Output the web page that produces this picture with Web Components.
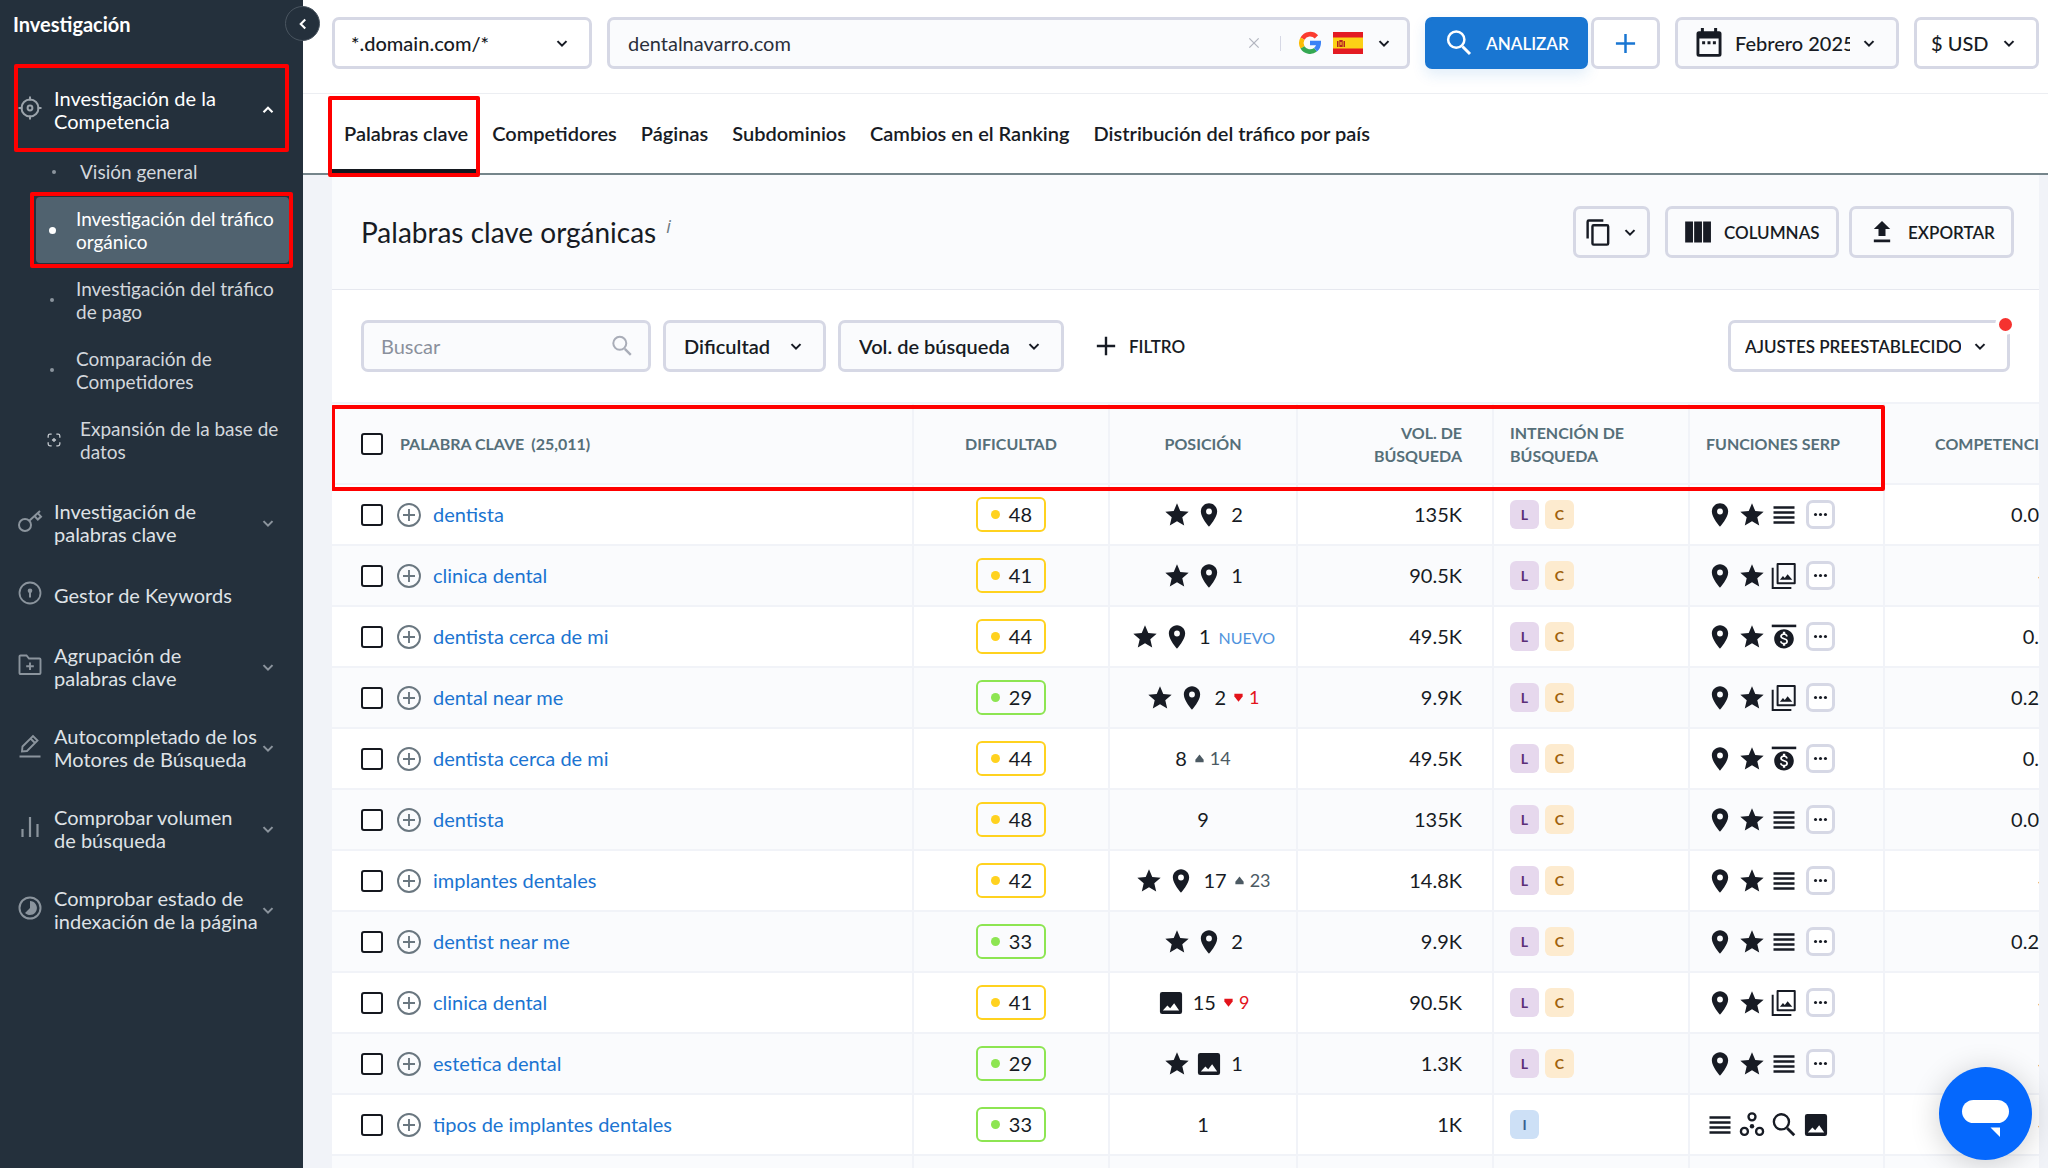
<!DOCTYPE html>
<html lang="es">
<head>
<meta charset="utf-8">
<meta name="viewport" content="width=device-width, initial-scale=1">
<title>Investigación del tráfico orgánico</title>
<style>
  :root{
    --ink:#171b24; --line:#d6d8e5; --soft:#f1f3f8; --pale:#fafbfd; --blue:#1976d2;
    --nav:#24303c; --mark:#ff0000; --muted:#566f79;
  }
  html,body{margin:0;height:100%;overflow:hidden}
  body{font-family:Lato,"Noto Sans",sans-serif;font-size:20px;line-height:23px;color:var(--ink);background:var(--soft)}
</style>
</head>
<body>
<app-shell></app-shell>
<script>
const ICONS={
  down:'<path d="M6 9.5l6 6 6-6" fill="none" stroke="currentColor" stroke-width="2.8"/>',
  up:'<path d="M6 15l6-6 6 6" fill="none" stroke="currentColor" stroke-width="2.8"/>',
  left:'<path d="M15 6l-6 6 6 6" fill="none" stroke="currentColor" stroke-width="2.8"/>',
  star:'<path d="M12 17.27L18.18 21l-1.64-7.03L22 9.24l-7.19-.61L12 2 9.19 8.63 2 9.24l5.46 4.73L5.82 21z"/>',
  pin:'<path d="M12 2C8.13 2 5 5.13 5 9c0 5.25 7 13 7 13s7-7.75 7-13c0-3.87-3.13-7-7-7zm0 9.5a2.5 2.5 0 1 1 0-5 2.5 2.5 0 0 1 0 5z"/>',
  image:'<path fill-rule="evenodd" d="M4.5 2.5h15a2 2 0 0 1 2 2v15a2 2 0 0 1-2 2h-15a2 2 0 0 1-2-2v-15a2 2 0 0 1 2-2zM5 18.5h14l-4.3-6.3-3.4 4.4-2.4-2.4z"/>',
  lines:'<path d="M3 4.4h18v2.3H3zM3 8.7h18V11H3zM3 13h18v2.3H3zM3 17.3h18v2.3H3z"/>',
  gallery:'<path d="M6.500 1.800h14.700v16.400h-14.700z" fill="none" stroke="currentColor" stroke-width="1.700" stroke-linejoin="round"/><path d="M2.300 5v17.200h16" fill="none" stroke="currentColor" stroke-width="1.700"/><path d="M8.500 15.200l2.600-3.200 1.600 1.700 2.400-3.200 4 4.700z"/>',
  ads:'<path d="M1.500 1.400h21v2.200h-21z"/><g transform="translate(3 4.600) scale(.75)"><path d="M12 1C5.700 1 .8 5.900.8 12S5.700 23 12 23s11.200-4.900 11.200-11S18.300 1 12 1zm1.410 17.090V20h-2.670v-1.930c-1.710-.36-3.160-1.460-3.270-3.400h1.960c.1 1.050.82 1.870 2.650 1.870 1.960 0 2.400-.98 2.400-1.590 0-.83-.44-1.610-2.670-2.140-2.480-.6-4.180-1.620-4.180-3.670 0-1.720 1.390-2.840 3.110-3.210V4h2.670v1.950c1.860.45 2.790 1.860 2.850 3.390H14.300c-.05-1.110-.64-1.870-2.220-1.870-1.500 0-2.400.68-2.400 1.640 0 .84.65 1.390 2.670 1.910s4.180 1.390 4.180 3.910c-.01 1.830-1.380 2.830-3.120 3.160z"/></g>',
  rings:'<g fill="none" stroke="currentColor" stroke-width="2"><circle cx="12" cy="5" r="3"/><circle cx="5.500" cy="17.500" r="3"/><circle cx="18.500" cy="17.500" r="3"/></g><circle cx="12" cy="13" r="1.900"/>',
  search:'<path d="M14.800 14.800l6 6" stroke="currentColor" stroke-width="2.400"/><circle cx="9.800" cy="9.300" r="6.500" fill="none" stroke="currentColor" stroke-width="2"/>',
  plus:'<path d="M12 2v20M2 12h20" stroke="currentColor" stroke-width="2.600"/>',
  addcircle:'<g fill="none" stroke="currentColor" stroke-width="1.900"><circle cx="12" cy="12" r="11"/><path d="M12 6v12M6 12h12"/></g>',
  close:'<path d="M4 4l16 16M20 4L4 20" stroke="currentColor" stroke-width="2.200"/>',
  calendar:'<path fill-rule="evenodd" d="M5.500 0h2.400v2.500h8.200V0h2.400v2.500H20a2 2 0 0 1 2 2V21a2 2 0 0 1-2 2H4a2 2 0 0 1-2-2V4.500a2 2 0 0 1 2-2h1.500zM4.300 8.300v12.500h15.400V8.300z"/><path d="M6.500 10.500h2.400v2.400H6.500zM10.800 10.500h2.400v2.400h-2.400zM15.100 10.500h2.400v2.400h-2.400z"/>',
  copy:'<path d="M16 1H4a2 2 0 0 0-2 2v14h2V3h12zm3 4H8a2 2 0 0 0-2 2v14a2 2 0 0 0 2 2h11a2 2 0 0 0 2-2V7a2 2 0 0 0-2-2zm0 16H8V7h11z"/>',
  columns:'<path d="M1 3h6.700v18H1zM8.700 3h6.700v18H8.700zM16.400 3h6.700v18h-6.700z"/>',
  upload:'<path d="M9 15.500h6v-6h4L12 2.500l-7 7h4zM5 18.500h14v2.300H5z"/>',
  target:'<g fill="none" stroke="currentColor" stroke-width="2"><circle cx="12" cy="12" r="8.500"/><circle cx="12" cy="12" r="2.400"/><path d="M12 .5v4M12 19.500v4M.5 12h4M19.500 12h4"/></g>',
  key:'<g fill="none" stroke="currentColor" stroke-width="2"><circle cx="7" cy="16" r="6"/><path d="M11.300 11.700L22 2M16.500 7l3.300 3.600 3.200-3-3.300-3.500"/></g>',
  keyhole:'<circle cx="12" cy="12" r="10.500" fill="none" stroke="currentColor" stroke-width="1.800"/><circle cx="12" cy="9.800" r="2.300"/><path d="M11 11h2v5.500h-2z"/>',
  folder:'<g fill="none" stroke="currentColor" stroke-width="1.900"><path d="M1.500 20V3.500a1 1 0 0 1 1-1h6l2.500 3h10.500a1 1 0 0 1 1 1V20a1 1 0 0 1-1 1h-19a1 1 0 0 1-1-1z"/><path d="M12 9.500v7.500M8.200 13.200h7.600"/></g>',
  pencil:'<g fill="none" stroke="currentColor" stroke-width="1.900"><path d="M4 17.500l.5-5L15 2l4.500 4.500L9 17zM12.500 4.500L17 9M1.500 22.500h21"/></g>',
  bars:'<path d="M4.500 14v8M12 2v20M19.500 9v13" stroke="currentColor" stroke-width="2.200"/>',
  gauge:'<circle cx="12" cy="12" r="10.500" fill="none" stroke="currentColor" stroke-width="2"/><path d="M12 5a7 7 0 1 1-5 12l5-5z"/>',
  expand:'<g fill="none" stroke="currentColor" stroke-width="2.200"><path d="M2 8V5a3 3 0 0 1 3-3h3M16 2h3a3 3 0 0 1 3 3v3M22 16v3a3 3 0 0 1-3 3h-3M8 22H5a3 3 0 0 1-3-3v-3M12 8.500v7M8.500 12h7"/></g>',
  dots:'<circle cx="5" cy="12" r="2.200"/><circle cx="12" cy="12" r="2.200"/><circle cx="19" cy="12" r="2.200"/>',
  dot:'<circle cx="12" cy="12" r="12"/>',
  rise:'<path d="M12 1l11 14v7H1v-7z"/>',
  fall:'<path d="M12 23L1 9V2h22v7z"/>',
  google:'<g fill="none" stroke-width="5"><path d="M19 5.300A9.500 9.500 0 0 0 3.800 7.300" stroke="#fb3c30"/><path d="M3.800 7.300a9.500 9.500 0 0 0 0 9.400" stroke="#fbbc04"/><path d="M3.800 16.700A9.500 9.500 0 0 0 18 19.300" stroke="#34a853"/><path d="M18 19.300a9.500 9.500 0 0 0 3.500-7.300H12" stroke="#3b82f6"/></g>',
};
const define=(tag,html,setup)=>{
  const t=document.createElement('template');t.innerHTML=html;
  customElements.define(tag,class extends HTMLElement{
    connectedCallback(){
      if(this.shadowRoot)return;
      this.attachShadow({mode:'open'}).append(t.content.cloneNode(true));
      if(setup)setup(this,this.shadowRoot);
    }
  });
};

define('ui-icon',`<style>:host{display:inline-flex;flex:none;width:var(--size,28px);height:var(--size,28px)}svg{width:100%;height:100%;fill:currentColor;overflow:visible}</style><svg viewBox="0 0 24 24" aria-hidden="true"></svg>`,
(el,r)=>{r.querySelector('svg').innerHTML=ICONS[el.getAttribute('name')]});

/* Drop-down: a native select with a chevron over its right padding. */
define('ui-select',`<style>
:host{display:grid;flex:none;height:52px;box-sizing:border-box;background:var(--fill,#fff);border:3px solid var(--line);border-radius:7px;align-items:center}
select,.lead,.chev{grid-area:1/1}
select{appearance:none;border:0;background:none;width:100%;height:100%;font:inherit;font-weight:var(--weight,500);color:inherit;padding:0 46px 0 var(--inset,16px);margin:0;cursor:pointer}
.lead{--size:30px;justify-self:start;margin-left:16px;pointer-events:none}
.chev{--size:18px;justify-self:end;margin-right:18px;pointer-events:none}
</style><select><option></option></select><ui-icon class="chev" name="down"></ui-icon>`,
(el,r)=>{
  const s=r.querySelector('select');s.setAttribute('aria-label',el.getAttribute('label'));
  s.options[0].textContent=el.getAttribute('value');
  const ic=el.getAttribute('icon');
  if(ic){const i=document.createElement('ui-icon');i.className='lead';i.setAttribute('name',ic);r.append(i)}
});

define('ui-button',`<style>
:host{display:flex;flex:none}
button{display:flex;flex:1;align-items:center;justify-content:center;gap:var(--gap,12px);height:52px;box-sizing:border-box;padding:0 var(--pad,16px);margin:0;font:inherit;font-size:17px;font-weight:600;color:inherit;background:var(--fill,#fff);border:3px solid var(--edge,var(--line));border-radius:7px;box-shadow:var(--shadow,none);cursor:pointer;white-space:nowrap}
</style><button type="button"><slot></slot></button>`,
(el,r)=>{const l=el.getAttribute('label');if(l)r.querySelector('button').setAttribute('aria-label',l)});

/* One entry of the side menu; [sub] is second level. */
define('nav-item',`<style>
:host{display:block;position:relative;--tone:#8b949d}
a,button{display:flex;align-items:center;width:100%;box-sizing:border-box;border:0;background:none;margin:0;font:inherit;color:#dfe2e6;text-align:left;text-decoration:none;cursor:pointer;padding:17px 26px 18px 18px}
.text{flex:1;margin-left:12px;white-space:pre-line}
.icon{--size:24px;color:var(--tone)}
.chev{--size:18px;color:var(--tone)}
:host([open]){--tone:#9ba3ab}
:host([open]) .text,:host([open]) .chev{color:#fff}
:host([sub]){margin-left:36px}
:host([sub]) a{padding:10px 0;font-size:19px;color:#d3d7dc}
:host([sub]) .lead{display:flex;justify-content:center;width:32px}
:host([sub]) .icon{--size:4px}
:host([deep]) .lead{width:36px}
:host([name=expand]) .icon{--size:14px;color:#c5cad0}
:host([sub]) .text{margin-left:8px}
:host([current]){margin-right:14px;background:#50626f;border-radius:4px}
:host([current]) .icon{--size:7px;color:#fff}
:host([current]) a{color:#fff;margin-right:-14px;width:auto}
:host([marked])::after{content:"";position:absolute;inset:var(--mark-inset,11px 14px 9px 14px);border:4px solid var(--mark);border-radius:2px;pointer-events:none}
:host([current])::after{inset:-5px -4px -5px -6px}
</style>`,
(el,r)=>{
  const sub=el.hasAttribute('sub'),grp=el.hasAttribute('group');
  const c=document.createElement(grp?'button':'a');
  if(grp){c.type='button';c.setAttribute('aria-expanded',el.hasAttribute('open'))}else c.href='#';
  if(el.hasAttribute('current'))c.setAttribute('aria-current','page');
  c.innerHTML=`<span class="lead"><ui-icon class="icon" name="${el.getAttribute('name')||'dot'}"></ui-icon></span><span class="text"><slot></slot></span>`+(grp?`<ui-icon class="chev" name="${el.hasAttribute('open')?'up':'down'}"></ui-icon>`:'');
  r.append(c);
});

define('side-nav',`<style>
:host{display:block;position:relative;z-index:2;flex:none;width:303px;background:var(--nav)}
h2{margin:0;padding:12px 13px 0;font-size:20px;line-height:24px;font-weight:700;color:#fff}
nav{display:flex;flex-direction:column;padding-top:34px}
.first{padding:0 0 0 0;margin-bottom:0}
.sub{display:flex;flex-direction:column;gap:4px;padding-bottom:10px;margin-top:-1px}
.fold{position:absolute;top:6px;right:-17px;width:35px;height:35px;box-sizing:border-box;display:flex;align-items:center;justify-content:center;padding:0;border:1px solid #4a5560;border-radius:50%;background:var(--nav);color:#fff;cursor:pointer;--size:18px}
</style>
<h2>Investigación</h2>
<button class="fold" type="button" aria-label="Contraer menú"><ui-icon name="left"></ui-icon></button>
<nav>
<nav-item group open marked name="target" style="--mark-inset:-6px 14px -1px 14px">Investigación de la Competencia</nav-item>
<div class="sub">
<nav-item sub deep>Visión general</nav-item>
<nav-item sub current marked>Investigación del tráfico
orgánico</nav-item>
<nav-item sub>Investigación del tráfico
de pago</nav-item>
<nav-item sub>Comparación de
Competidores</nav-item>
<nav-item sub deep name="expand">Expansión de la base de
datos</nav-item>
</div>
<nav-item group name="key">Investigación de palabras clave</nav-item>
<nav-item name="keyhole">Gestor de Keywords</nav-item>
<nav-item group name="folder">Agrupación de palabras clave</nav-item>
<nav-item group name="pencil">Autocompletado de los Motores de Búsqueda</nav-item>
<nav-item group name="bars">Comprobar volumen de búsqueda</nav-item>
<nav-item group name="gauge">Comprobar estado de indexación de la página</nav-item>
</nav>`);

define('query-bar',`<style>
:host{display:flex;gap:15px;padding:17px 9px 24px 29px;border-bottom:1px solid #eceef2;background:#fff}
.field{display:flex;flex:1;min-width:0;align-items:center;height:52px;box-sizing:border-box;border:3px solid var(--line);border-radius:7px;background:var(--pale);padding-right:14px}
input{flex:1;min-width:0;height:100%;box-sizing:border-box;border:0;outline:0;background:none;font:inherit;color:#2a2f3a;padding:0 18px}
.field button{display:flex;align-items:center;border:0;background:none;padding:0;margin:0;color:inherit;cursor:pointer}
.clear{--size:18px;color:#b3b6c0 !important}
.bar{width:1px;height:15px;background:var(--line);margin:0 18px 0 19px}
.engine{gap:12px}
.engine svg{width:30px;height:22px}
</style>
<ui-select label="Tipo de dominio" value="*.domain.com/*" style="width:260px"></ui-select>
<div class="field"><input type="text" aria-label="Dominio" value="dentalnavarro.com">
<button class="clear" type="button" aria-label="Borrar"><ui-icon name="close" style="--size:14px"></ui-icon></button><span class="bar"></span>
<button class="engine" type="button" aria-label="Google España"><ui-icon name="google" style="--size:22px"></ui-icon>
<svg viewBox="0 0 30 22" aria-hidden="true"><path fill="#e31b23" d="M0 0h30v22H0z"/><path fill="#fcd116" d="M0 5.500h30v11H0z"/><path fill="#b4251f" d="M4 9h1.500v6H4zM10.500 9H12v6h-1.500zM6.300 8h3.400v7H6.300z"/><path fill="#f3a52b" d="M7.200 10h1.500v3H7.200z"/></svg>
<ui-icon name="down" style="--size:18px"></ui-icon></button></div>
<ui-button style="width:151px;color:#fff;--fill:#1976d2;--edge:#1976d2;--shadow:0 6px 14px #1976d220"><ui-icon name="search" style="--size:30px"></ui-icon>ANALIZAR</ui-button>
<ui-button label="Añadir" style="width:69px;color:var(--blue)"><ui-icon name="plus" style="--size:23px"></ui-icon></ui-button>
<ui-select label="Mes" value="Febrero 2025" icon="calendar" style="width:224px;--fill:var(--pale);--inset:57px"></ui-select>
<ui-select label="Moneda" value="$ USD" style="width:125px;--inset:14px"></ui-select>`);

define('tab-bar',`<style>
:host{display:block;background:#fff;border-bottom:2px solid #75858b;padding-left:29px}
nav{display:flex;height:79px}
a{position:relative;display:flex;align-items:center;box-sizing:border-box;padding:0 12px;color:inherit;font-weight:600;text-decoration:none;white-space:nowrap}
a[aria-current]{border-bottom:4px solid #14181f;padding-top:4px}
a[aria-current]::after{content:"";position:absolute;inset:2px 0 -8px -4px;border:4px solid var(--mark);border-radius:2px}
</style><nav><a href="#" aria-current="page">Palabras clave</a><a href="#">Competidores</a><a href="#">Páginas</a><a href="#">Subdominios</a><a href="#">Cambios en el Ranking</a><a href="#">Distribución del tráfico por país</a></nav>`);

const ROWS=[
 ['dentista',48,'star pin',2,'','135K','LC','lines','0.0'],
 ['clinica dental',41,'star pin',1,'','90.5K','LC','gallery','-'],
 ['dentista cerca de mi',44,'star pin',1,'new','49.5K','LC','ads','0.'],
 ['dental near me',29,'star pin',2,-1,'9.9K','LC','gallery','0.2'],
 ['dentista cerca de mi',44,'',8,14,'49.5K','LC','ads','0.'],
 ['dentista',48,'',9,'','135K','LC','lines','0.0'],
 ['implantes dentales',42,'star pin',17,23,'14.8K','LC','lines','-'],
 ['dentist near me',33,'star pin',2,'','9.9K','LC','lines','0.2'],
 ['clinica dental',41,'image',15,-9,'90.5K','LC','gallery','-'],
 ['estetica dental',29,'star image',1,'','1.3K','LC','lines','-'],
 ['tipos de implantes dentales',33,'',1,'','1K','I','','-'],
];
const icon=n=>`<ui-icon name="${n}"></ui-icon>`;
const change=c=>c===''?'':c==='new'?'<span class="new">NUEVO</span>':`<span class="${c>0?'rise':'fall'}"><ui-icon name="${c>0?'rise':'fall'}"></ui-icon>${Math.abs(c)}</span>`;
const row=([k,d,f,p,c,v,i,s,cp],n)=>`<tr>
<td><div class="key"><input type="checkbox" aria-label="Seleccionar ${k}"><button class="add" type="button" aria-label="Añadir ${k}">${icon('addcircle')}</button><a href="#">${k}</a></div></td>
<td class="mid"><span class="kd ${d<40?'low':''}">${d}</span></td>
<td><div class="pos">${f.split(' ').filter(Boolean).map(icon).join('')}<span class="num">${p}</span>${change(c)}</div></td>
<td class="vol">${v}</td>
<td class="in"><div class="tags">${[...i].map(x=>`<span class="tag ${x}">${x}</span>`).join('')}</div></td>
<td class="in"><div class="serp">${s?['pin','star',s].map(icon).join('')+`<button class="more" type="button" aria-label="Más funciones">${icon('dots')}</button>`:['lines','rings','search','image'].map(icon).join('')}</div></td>
<td class="comp">${cp==='-'?'<span class="dash">-</span>':cp}</td></tr>`;

define('keyword-table',`<style>
:host{display:block;position:relative;overflow:hidden;border-top:2px solid var(--soft)}
table{width:100%;table-layout:fixed;border-collapse:separate;border-spacing:0}
td,th{box-sizing:border-box;padding:0;border:0 solid var(--soft);border-width:0 2px 2px 0}
td:last-child,th:last-child{border-right:0}
td{height:61px}
th{height:81px;font-size:16px;font-weight:700;color:var(--muted);background:var(--pale);text-align:center}
tbody tr:nth-child(even) td{background:var(--pale)}
tbody tr td{background:#fff}
.key{display:flex;align-items:center;padding-left:29px}
input{appearance:none;flex:none;width:22px;height:22px;margin:0;box-sizing:border-box;border:2px solid #15181f;border-radius:3px;background:#fff}
.add{display:flex;border:0;background:none;padding:0;margin:0 12px 0 14px;color:#6a7780;--size:24px}
a{color:#1b74d1;text-decoration:none}
th .key{gap:17px}
th .n{margin-left:-10px}
.mid{text-align:center}
.kd{display:inline-flex;align-items:center;justify-content:flex-end;gap:9px;width:70px;height:35px;box-sizing:border-box;padding-right:12px;border:2px solid #ffd21f;border-radius:6px;vertical-align:middle}
.kd::before{content:"";width:9px;height:9px;border-radius:50%;background:#ffd21f}
.low{border-color:#8de552}.low::before{background:#8de552}
.pos,.serp{display:flex;align-items:center;gap:4px}
.pos{justify-content:center}
.pos ui-icon+.num{margin-left:4px}
.new{font-size:16px;color:#4f93dd;margin:2px 0 0 4px}
.rise,.fall{display:flex;align-items:center;gap:6px;font-size:18px;margin-left:4px;--size:9px;color:#4c5a63}
.fall{color:#e3131b}
.vol{text-align:right;padding-right:30px}
.in{text-align:left;padding-left:16px}
.tags{display:flex;gap:6px}
.tag{display:flex;align-items:center;justify-content:center;width:29px;height:29px;border-radius:6px;font-size:14px;font-weight:700}
.L{background:#e6d8ed;color:#5b2f78}.C{background:#fdebcf;color:#a0620d}.I{background:#cde0f6;color:#38608f}
.more{display:flex;align-items:center;justify-content:center;width:29px;height:29px;box-sizing:border-box;padding:0;margin:0 0 0 4px;border:3px solid var(--line);border-radius:7px;background:#fff;color:inherit;--size:17px}
.comp{text-align:right}
.dash{margin-right:-6px}
th.comp{overflow:hidden;white-space:nowrap;text-align:right}
.frame{position:absolute;left:-1px;right:154px;top:1px;height:86px;box-sizing:border-box;border:4px solid var(--mark);border-radius:2px;pointer-events:none}
</style>
<table><colgroup><col><col style="width:196px"><col style="width:188px"><col style="width:196px"><col style="width:196px"><col style="width:195px"><col style="width:154px"></colgroup>
<thead><tr><th><div class="key"><input type="checkbox" aria-label="Seleccionar todo"><span>PALABRA CLAVE</span><span class="n">(25,011)</span></div></th><th>DIFICULTAD</th><th>POSICIÓN</th><th class="vol">VOL. DE<br>BÚSQUEDA</th><th class="in">INTENCIÓN DE<br>BÚSQUEDA</th><th class="in">FUNCIONES SERP</th><th class="comp">COMPETENCI</th></tr></thead>
<tbody></tbody></table><div class="frame"></div>`,
(el,r)=>{r.querySelector('tbody').innerHTML=ROWS.map(row).join('')+'<tr><td></td><td class="mid"><span class="kd low"></span></td><td></td><td></td><td></td><td></td><td></td></tr>'});

define('keyword-card',`<style>
:host{display:block;flex:1;min-height:0;overflow:hidden;background:#fff;margin:0 9px 0 29px}
header,.filters{display:flex;align-items:center;padding:0 29px}
header{height:114px;gap:15px;background:var(--pale);border-bottom:1px solid #e6e8ef}
h1{flex:1;margin:0;font-size:28px;line-height:36px;font-weight:400}
h1 i{font-family:"Open Sans",sans-serif;font-size:18px;line-height:18px;vertical-align:super;color:#6d7981;margin-left:10px}
.filters{height:112px;gap:12px}
.search{display:flex;align-items:center;width:290px;height:52px;box-sizing:border-box;border:3px solid var(--line);border-radius:7px;background:var(--pale);padding:0 14px 0 17px;color:#a9adb8;--size:24px}
.search input{flex:1;min-width:0;border:0;outline:0;padding:0;background:none;font:inherit}
.search input::placeholder{color:#8a909c;opacity:1}
.gap{flex:1}
.preset{position:relative}
.preset::after{content:"";position:absolute;top:-5px;right:-5px;width:13px;height:13px;border:4px solid #fff;border-radius:50%;background:#f5322f;margin:-1px -1px 0 0}
</style>
<header><h1>Palabras clave orgánicas<i>i</i></h1>
<ui-button label="Copiar" style="width:77px;--gap:8px;--fill:transparent;--pad:0px"><ui-icon name="copy" style="--size:29px"></ui-icon><ui-icon name="down" style="--size:18px"></ui-icon></ui-button>
<ui-button style="width:169px;--fill:transparent"><ui-icon name="columns"></ui-icon>COLUMNAS</ui-button>
<ui-button style="width:161px;--fill:transparent"><ui-icon name="upload"></ui-icon>EXPORTAR</ui-button></header>
<div class="filters">
<label class="search"><input type="search" placeholder="Buscar" aria-label="Buscar"><ui-icon name="search"></ui-icon></label>
<ui-select label="Dificultad" value="Dificultad" style="width:163px;--fill:var(--pale);--inset:18px;--weight:600"></ui-select>
<ui-select label="Volumen de búsqueda" value="Vol. de búsqueda" style="width:226px;--fill:var(--pale);--inset:18px;--weight:600"></ui-select>
<ui-button style="--fill:transparent;--edge:transparent"><ui-icon name="plus" style="--size:22px"></ui-icon>FILTRO</ui-button>
<span class="gap"></span>
<div class="preset"><ui-select label="Ajustes preestablecidos" value="AJUSTES PREESTABLECIDOS" style="width:282px;font-size:17px;--inset:14px;--weight:600"></ui-select></div>
</div>
<keyword-table></keyword-table>`);

define('chat-button',`<style>
:host{position:fixed;right:16px;bottom:8px;z-index:5}
button{display:block;width:93px;height:93px;padding:0;border:0;border-radius:50%;background:#0568fd;box-shadow:0 4px 30px #00000030;cursor:pointer}
svg{display:block;width:100%;height:100%}
</style><button type="button" aria-label="Abrir chat"><svg viewBox="0 0 93 93" fill="#fff" aria-hidden="true"><rect x="23" y="33" width="47" height="23" rx="11.500"/><path d="M51.500 60.500h9.500v9.500z"/></svg></button>`);

define('app-shell',`<style>
:host{display:flex;height:100vh;overflow:hidden}
main{display:flex;flex:1;min-width:0;flex-direction:column;background:var(--soft)}
</style><side-nav></side-nav><main><query-bar></query-bar><tab-bar></tab-bar><keyword-card></keyword-card></main><chat-button></chat-button>`);
</script>
</body>
</html>
